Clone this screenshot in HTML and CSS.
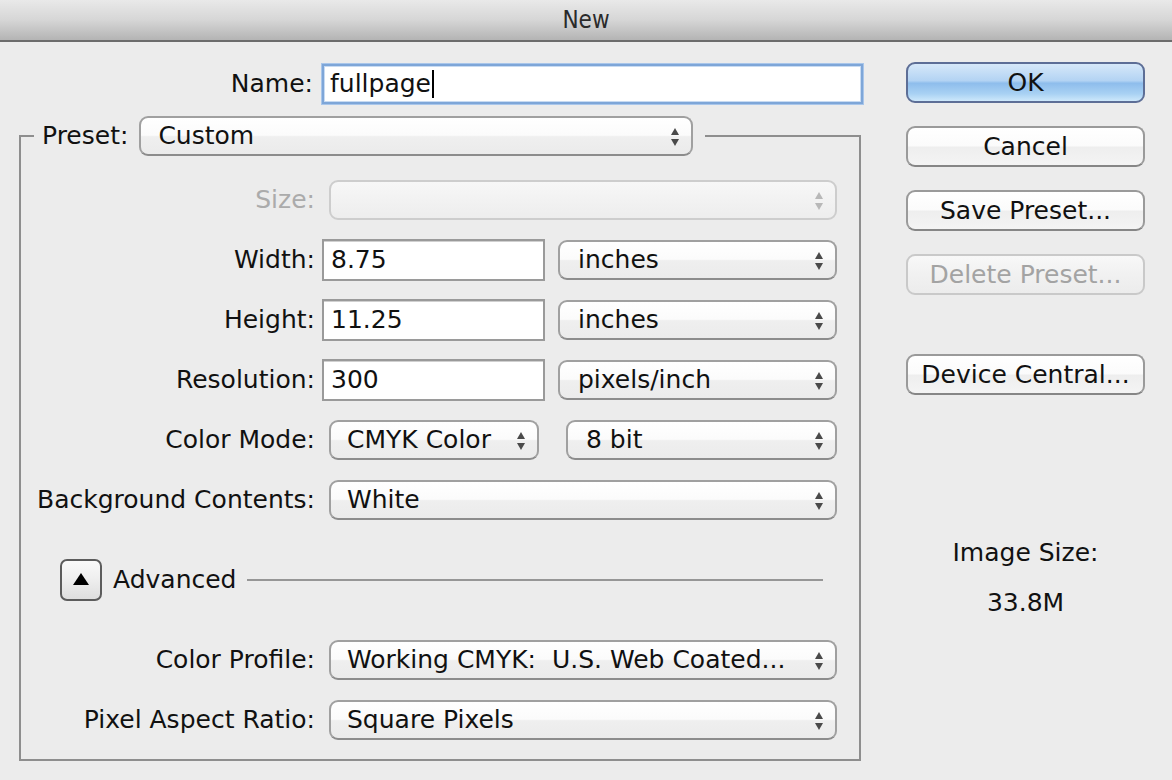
FILE: index.html
```html
<!DOCTYPE html>
<html lang="en">
<head>
<meta charset="utf-8">
<title>New</title>
<link rel="stylesheet" href="styles.css">
</head>
<body>
<div class="titlebar">New</div>
<div class="dialog">
  <div class="main">
    <div class="name-row">
      <label class="lbl">Name:</label>
      <div class="textfield focus">fullpage<span class="caret"></span></div>
    </div>
    <fieldset class="group">
      <legend class="legend">
        <span class="legend-label">Preset:</span>
        <div class="popup preset">Custom</div>
      </legend>
      <div class="grid">
        <label class="lbl disabled">Size:</label>
        <div class="ctl"><div class="popup full off"></div></div>

        <label class="lbl">Width:</label>
        <div class="ctl"><div class="textfield num">8.75</div><div class="popup unit">inches</div></div>

        <label class="lbl">Height:</label>
        <div class="ctl"><div class="textfield num">11.25</div><div class="popup unit">inches</div></div>

        <label class="lbl">Resolution:</label>
        <div class="ctl"><div class="textfield num">300</div><div class="popup unit">pixels/inch</div></div>

        <label class="lbl">Color Mode:</label>
        <div class="ctl"><div class="popup mode">CMYK Color</div><div class="popup bits">8 bit</div></div>

        <label class="lbl">Background Contents:</label>
        <div class="ctl"><div class="popup full">White</div></div>

        <div class="advanced">
          <div class="disclosure"><span class="tri"></span></div>
          <span class="adv-label">Advanced</span>
          <span class="adv-line"></span>
        </div>

        <label class="lbl">Color Profile:</label>
        <div class="ctl"><div class="popup full">Working CMYK:&nbsp; U.S. Web Coated...</div></div>

        <label class="lbl">Pixel Aspect Ratio:</label>
        <div class="ctl"><div class="popup full">Square Pixels</div></div>
      </div>
    </fieldset>
  </div>
  <div class="side">
    <div class="btn default">OK</div>
    <div class="btn">Cancel</div>
    <div class="btn">Save Preset...</div>
    <div class="btn off">Delete Preset...</div>
    <div class="btn device">Device Central...</div>
    <div class="size-label">Image Size:</div>
    <div class="size-value">33.8M</div>
  </div>
</div>
</body>
</html>
```

FILE: styles.css
```css
* { box-sizing: border-box; }

html, body {
  margin: 0;
  padding: 0;
}

body {
  width: 1172px;
  height: 780px;
  overflow: hidden;
  background: #ececec;
  font-family: "DejaVu Sans", "Liberation Sans", sans-serif;
  font-size: 25px;
  color: #111;
}

.titlebar {
  height: 42px;
  border-bottom: 2px solid #6c6c6c;
  background: linear-gradient(#e9e9e9, #d6d6d6 50%, #b4b4b4);
  text-align: center;
  font-family: "DejaVu Sans Condensed", "DejaVu Sans", sans-serif;
  font-size: 24px;
  line-height: 40px;
  color: #2a2a2a;
}

.dialog {
  display: flex;
}

.main {
  width: 862px;
  padding: 22px 0 0 19px;
}

.name-row {
  display: grid;
  grid-template-columns: 294px 541px;
  column-gap: 9px;
  align-items: center;
  height: 40px;
}

.lbl {
  text-align: right;
  white-space: nowrap;
  line-height: 30px;
}

.lbl.disabled { color: #ababab; }

.textfield {
  height: 42px;
  background: #fff;
  border: 2px solid #9a9a9a;
  box-shadow: inset 0 1px 0 #d0d0d0;
  padding-left: 7px;
  line-height: 38px;
  white-space: nowrap;
  display: flex;
  align-items: center;
}

.textfield.focus {
  height: 40px;
  border: 2px solid #7ea6d8;
  box-shadow: 0 0 0 1px #a9c6ea, inset 0 0 0 1px #c8dbf2;
  padding-left: 6px;
}

.caret {
  display: inline-block;
  width: 2px;
  height: 28px;
  background: #000;
  margin-left: 1px;
}

.textfield.num {
  width: 223px;
  flex: none;
}

/* group box */
.group {
  margin: 12px 0 0 0;
  width: 842px;
  border: 2px solid #8e8e8e;
  padding: 24px 22px 19px 0;
  min-width: 0;
}

.legend {
  margin-left: 13px;
  padding: 0 12px 0 8px;
  display: flex;
  align-items: center;
}

.legend-label {
  margin-right: 11px;
  line-height: 30px;
}

.popup {
  position: relative;
  height: 40px;
  border: 2px solid #a0a0a0;
  border-bottom-color: #8c8c8c;
  border-radius: 9px;
  background: linear-gradient(#ffffff, #fbfbfb 48%, #efefef 52%, #ebebeb);
  display: flex;
  align-items: center;
  padding-left: 16px;
  white-space: nowrap;
  line-height: 30px;
}

.popup::before,
.popup::after {
  content: "";
  position: absolute;
  right: 12px;
  width: 0;
  height: 0;
  border-left: 4.5px solid transparent;
  border-right: 4.5px solid transparent;
}

.popup::before {
  top: 10px;
  border-bottom: 7px solid #4a4a4a;
}

.popup::after {
  top: 21px;
  border-top: 7px solid #4a4a4a;
}

.popup.off {
  border-color: #cdcdcd;
  background: linear-gradient(#f7f7f7, #f2f2f2 50%, #ededed);
}

.popup.off::before { border-bottom-color: #b8b8b8; }
.popup.off::after { border-top-color: #b8b8b8; }

.preset {
  width: 554px;
  padding-left: 17px;
}

.grid {
  display: grid;
  grid-template-columns: 294px 515px;
  grid-template-rows: repeat(6, 40px) 80px 40px 40px;
  column-gap: 7px;
  row-gap: 20px;
  align-items: center;
}

.ctl {
  display: flex;
  align-items: center;
}

.popup.full {
  margin-left: 7px;
  width: 508px;
}

.popup.unit {
  margin-left: 13px;
  width: 279px;
  padding-left: 18px;
}

.popup.mode {
  margin-left: 7px;
  width: 210px;
}

.popup.bits {
  margin-left: 27px;
  width: 271px;
  padding-left: 18px;
}

/* advanced disclosure */
.advanced {
  grid-column: 1 / -1;
  margin-left: 39px;
  display: flex;
  align-items: center;
  height: 42px;
}

.disclosure {
  width: 42px;
  height: 42px;
  flex: none;
  border: 2px solid #5c5c5c;
  border-radius: 7px;
  background: linear-gradient(#fafafa, #eeeeee 50%, #dedede);
  display: flex;
  align-items: center;
  justify-content: center;
}

.tri {
  width: 0;
  height: 0;
  border-left: 8.5px solid transparent;
  border-right: 8.5px solid transparent;
  border-bottom: 12px solid #000;
  margin-top: -2px;
}

.adv-label {
  margin-left: 11px;
  line-height: 30px;
}

.adv-line {
  display: block;
  width: 576px;
  height: 2px;
  background: #969696;
  margin-left: 10px;
}

/* right column */
.side {
  margin-left: 44px;
  width: 239px;
  padding-top: 20px;
  display: flex;
  flex-direction: column;
  align-items: center;
}

.btn {
  width: 239px;
  height: 41px;
  border: 2px solid #9a9a9a;
  border-bottom-color: #868686;
  border-radius: 9px;
  background: linear-gradient(#ffffff, #fbfbfb 48%, #eeeeee 52%, #f4f4f4);
  text-align: center;
  line-height: 37px;
  margin-bottom: 23px;
  white-space: nowrap;
}

.btn.default {
  border-color: #5d6e96;
  background: linear-gradient(#d6e8f9, #b3d3f3 45%, #8ebdec 52%, #a8d1f3 80%, #cde8fb);
}

.btn.off {
  color: #a3a3a3;
  border-color: #c9c9c9;
  background: linear-gradient(#f8f8f8, #f1f1f1 50%, #ececec);
}

.btn.device {
  margin-top: 36px;
}

.size-label {
  margin-top: 120px;
  line-height: 30px;
}

.size-value {
  margin-top: 20px;
  line-height: 30px;
}
```
